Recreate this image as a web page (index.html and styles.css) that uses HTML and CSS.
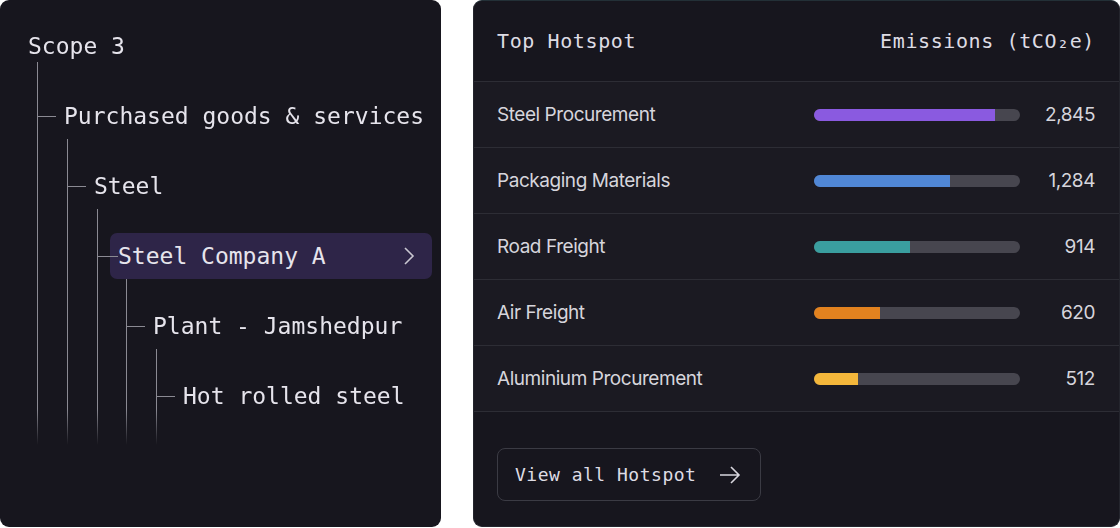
FILE: index.html
```html
<!DOCTYPE html>
<html>
    <head>
        <meta charset='utf-8'/>
        <title>Hotspots</title>
        <link rel="stylesheet" href="styles.css">
    </head>
    <body>
        <div class="panel tree-panel">
            <div class="tree">
                <div class="node root">
                    <div class="label">Scope 3</div>
                    <div class="children">
                        <div class="node">
                            <div class="label">Purchased goods &amp; services</div>
                            <div class="children">
                                <div class="node">
                                    <div class="label">Steel</div>
                                    <div class="children">
                                        <div class="node current">
                                            <div class="label">
                                                <span>Steel Company A</span>
                                                <svg class="chevron" width="14" height="20" viewBox="0 0 14 20">
                                                    <path d="M3 2 L11 10 L3 18" fill="none" stroke="#c9c7d1" stroke-width="1.6"/>
                                                </svg>
                                            </div>
                                            <div class="children">
                                                <div class="node">
                                                    <div class="label">Plant - Jamshedpur</div>
                                                    <div class="children">
                                                        <div class="node">
                                                            <div class="label">Hot rolled steel</div>
                                                        </div>
                                                    </div>
                                                </div>
                                            </div>
                                        </div>
                                    </div>
                                </div>
                            </div>
                        </div>
                    </div>
                </div>
            </div>
        </div>

        <div class="panel hotspot-panel">
            <div class="hotspot-head">
                <span>Top Hotspot</span>
                <span>Emissions (tCO₂e)</span>
            </div>
            <ul class="hotspot-list">
                <li class="hotspot">
                    <span class="name">Steel Procurement</span>
                    <span class="bar"><span class="fill purple" style="width: 88%"></span></span>
                    <span class="value">2,845</span>
                </li>
                <li class="hotspot">
                    <span class="name">Packaging Materials</span>
                    <span class="bar"><span class="fill blue" style="width: 66%"></span></span>
                    <span class="value">1,284</span>
                </li>
                <li class="hotspot">
                    <span class="name">Road Freight</span>
                    <span class="bar"><span class="fill teal" style="width: 46.5%"></span></span>
                    <span class="value">914</span>
                </li>
                <li class="hotspot">
                    <span class="name">Air Freight</span>
                    <span class="bar"><span class="fill orange" style="width: 32%"></span></span>
                    <span class="value">620</span>
                </li>
                <li class="hotspot">
                    <span class="name">Aluminium Procurement</span>
                    <span class="bar"><span class="fill yellow" style="width: 21.5%"></span></span>
                    <span class="value">512</span>
                </li>
            </ul>
            <div class="hotspot-foot">
                <button class="view-all">
                    <span>View all Hotspot</span>
                    <svg width="24" height="20" viewBox="0 0 24 20">
                        <path d="M2 10 H21 M13 2 L21 10 L13 18" fill="none" stroke="#d8d6de" stroke-width="1.6"/>
                    </svg>
                </button>
            </div>
        </div>
    </body>
</html>
```

FILE: styles.css
```css
* {
    margin: 0;
    padding: 0;
    box-sizing: border-box;
}

body {
    display: flex;
    gap: 32px;
    background: #ffffff;
    width: 1120px;
    height: 528px;
}

.panel {
    height: 527px;
    background: #17161e;
    border-radius: 9px;
    color: #e6e4ec;
}

/* ---- scope tree ---- */

.tree-panel {
    width: 441px;
    padding: 31px 9px 0 28px;
}

.tree {
    display: flex;
    flex-direction: column;
    height: 414px;
    font-family: "DejaVu Sans Mono", monospace;
    font-size: 23px;
    -webkit-mask-image: linear-gradient(to bottom, #000 378px, transparent 414px);
    mask-image: linear-gradient(to bottom, #000 378px, transparent 414px);
}

.node {
    flex: 1;
    display: flex;
    flex-direction: column;
}

.label {
    position: relative;
    height: 46px;
    line-height: 46px;
    padding-left: 26px;
    white-space: nowrap;
}

/* connector from the parent line */
.label::before {
    content: "";
    position: absolute;
    left: -1px;
    top: 50%;
    width: 19px;
    border-top: 1px solid #8b8a93;
}

.children {
    flex: 1;
    display: flex;
    flex-direction: column;
    margin-left: 29px;
    padding-top: 24px;
    border-left: 1px solid #8b8a93;
}

.root > .label {
    height: 31px;
    line-height: 31px;
    padding-left: 0;
}

.root > .label::before {
    display: none;
}

.root > .children {
    margin-left: 9px;
    padding-top: 31px;
}

.current > .label {
    display: flex;
    align-items: center;
    justify-content: space-between;
    margin-left: 12px;
    padding: 0 16px 0 8px;
    background: #2e2548;
    border-radius: 7px;
}

.current > .label::before {
    left: -13px;
    width: 21px;
    z-index: 1;
}

.current > .children {
    margin-left: 28px;
}

/* ---- hotspot table ---- */

.hotspot-panel {
    width: 647px;
    border: 1px solid #24252d;
    border-top-color: #233037;
    display: flex;
    flex-direction: column;
    overflow: hidden;
}

.hotspot-head {
    display: flex;
    justify-content: space-between;
    align-items: center;
    height: 81px;
    padding: 0 24px 0 23px;
    font-family: "DejaVu Sans Mono", monospace;
    font-size: 20px;
    letter-spacing: 0.6px;
    color: #dedce4;
    border-bottom: 1px solid #2d2d35;
}

.hotspot-list {
    list-style: none;
}

.hotspot {
    display: grid;
    grid-template-columns: 1fr 206px 75px;
    align-items: center;
    height: 66px;
    padding: 0 24px 0 23px;
    background: #1b1a22;
    border-bottom: 1px solid #2d2d35;
    font-family: Inter, "Noto Sans", sans-serif;
    font-size: 19px;
    letter-spacing: -0.45px;
    color: #d6d5dc;
}

.bar {
    display: block;
    height: 12px;
    background: #47464f;
    border-radius: 6px;
    overflow: hidden;
}

.fill {
    display: block;
    height: 100%;
}

.purple { background: #8a5ae0; }
.blue   { background: #5087d6; }
.teal   { background: #3a9e9f; }
.orange { background: #e2821f; }
.yellow { background: #f4b73b; }

.value {
    text-align: right;
}

.hotspot-foot {
    padding: 36px 23px 0;
}

.view-all {
    display: flex;
    align-items: center;
    gap: 22px;
    height: 53px;
    padding: 0 18px 0 17px;
    background: transparent;
    border: 1px solid #3b3b44;
    border-radius: 8px;
    font-family: "DejaVu Sans Mono", monospace;
    font-size: 18px;
    letter-spacing: 0.5px;
    color: #dedce4;
}
```
